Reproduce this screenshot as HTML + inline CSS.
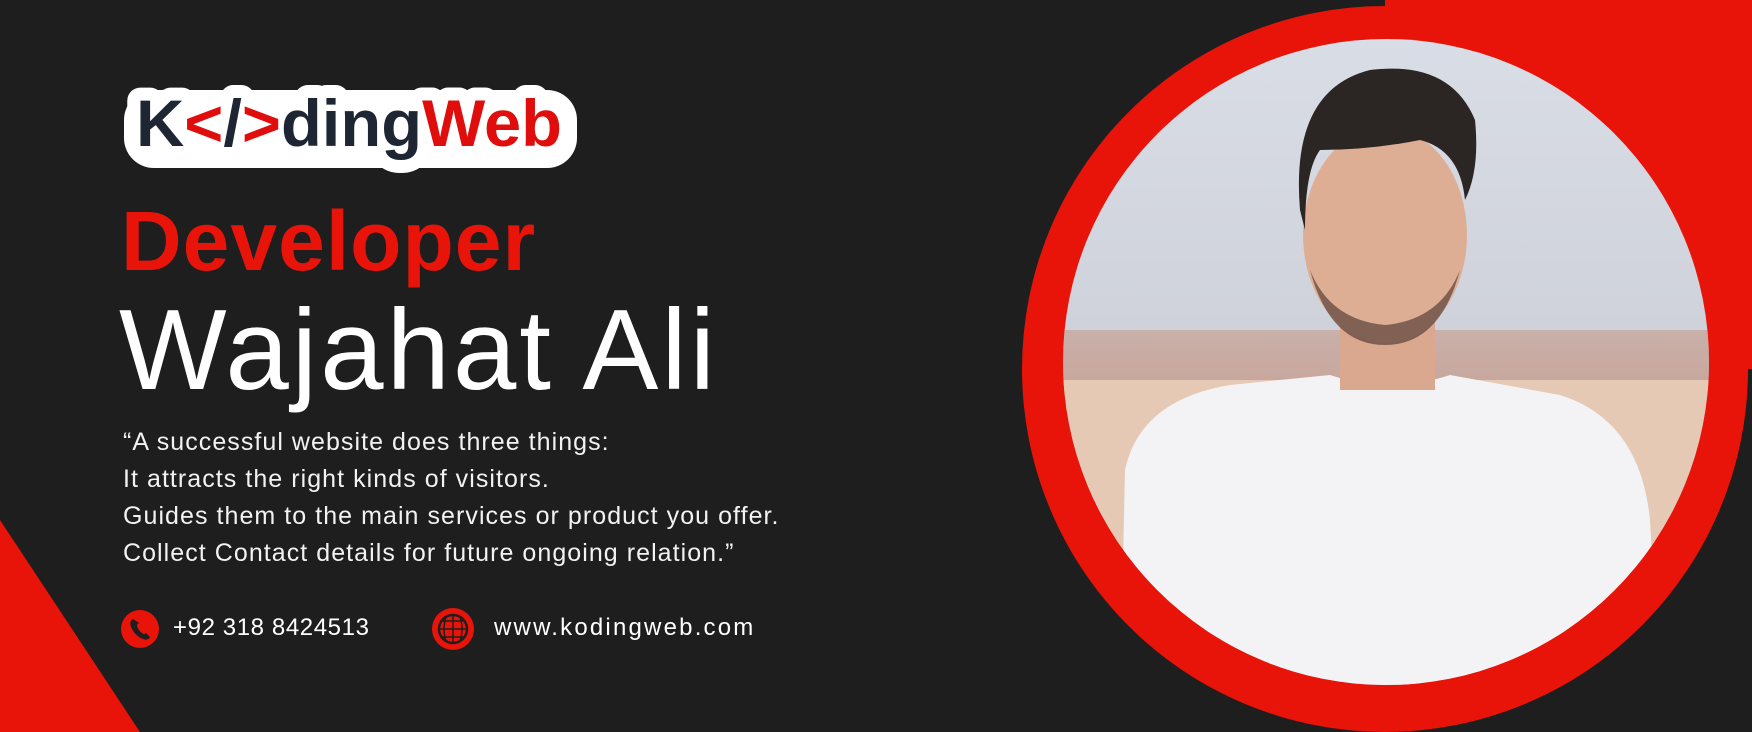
<!DOCTYPE html>
<html><head><meta charset="utf-8"><style>
*{margin:0;padding:0}
body{width:1752px;height:732px;background:#1e1e1e;overflow:hidden;position:relative;font-family:"Liberation Sans",sans-serif}
.abs{position:absolute}
.dev{left:121px;top:193px;font-size:84px;font-weight:bold;color:#e8140a;letter-spacing:1px}
.name{left:119px;top:285px;font-size:114px;color:#fff;letter-spacing:3px}
.quote{left:123px;top:424px;font-size:25px;line-height:37px;color:#f2f2f2;letter-spacing:1.05px}
.ct{top:614px;font-size:24px;color:#fff}
</style></head><body>
<svg class="abs" style="left:0;top:0" width="1752" height="732">
  <polygon points="0,520 0,732 140,732" fill="#e8140a"/>
  <rect x="1385" y="0" width="367" height="369" fill="#e8140a"/>
  <circle cx="1385" cy="369" r="363" fill="#e8140a"/>
  <defs>
    <clipPath id="c"><circle cx="1386" cy="362" r="323"/></clipPath>
    <linearGradient id="sky" x1="0" y1="0" x2="0" y2="1">
      <stop offset="0" stop-color="#d9dde6"/><stop offset="0.45" stop-color="#cfd2da"/>
      <stop offset="0.6" stop-color="#c9a89a"/><stop offset="1" stop-color="#e3c7b5"/>
    </linearGradient>
  </defs>
  <g clip-path="url(#c)">
    <rect x="1060" y="39" width="660" height="650" fill="url(#sky)"/>
    <rect x="1060" y="330" width="660" height="60" fill="#c49a8a" opacity="0.6"/>
    <rect x="1060" y="380" width="660" height="300" fill="#e6c9b4"/>
    <path d="M1120,700 L1125,470 Q1140,400 1230,385 L1330,375 Q1390,395 1450,375 L1560,395 Q1640,420 1650,520 L1660,700 Z" fill="#f3f3f5"/>
    <rect x="1340" y="300" width="95" height="90" fill="#d9a88f"/>
    <ellipse cx="1385" cy="235" rx="82" ry="108" fill="#deae94"/>
    <path d="M1300,210 Q1290,90 1370,70 Q1450,60 1475,120 Q1480,170 1465,200 Q1460,150 1420,140 Q1370,150 1320,150 Q1305,170 1305,230 Z" fill="#2b2523"/>
    <path d="M1310,270 Q1330,345 1385,345 Q1440,345 1460,270 Q1440,320 1385,325 Q1330,320 1310,270 Z" fill="#5a4038" opacity="0.7"/>
  </g>
  <circle cx="140" cy="629" r="19" fill="#e8140a"/>
  <path d="M133,619 q-4,2 -2,8 q4,9 12,12 q5,2 7,-2 l-4,-4 q-2,2 -4,0 q-4,-3 -5,-7 q0,-2 2,-3 z" fill="#1e1e1e"/>
  <circle cx="453" cy="629" r="21" fill="#e8140a"/>
  <circle cx="453" cy="629" r="14" fill="none" stroke="#1e1e1e" stroke-width="2.5"/>
  <path d="M439,629 h28 M441,621 h24 M441,637 h24 M453,615 v28 M446,617 q-4,12 0,24 M460,617 q4,12 0,24" stroke="#1e1e1e" stroke-width="1.5" fill="none"/>
  <rect x="124" y="90" width="453" height="78" rx="30" fill="#fff"/>
  <g font-family="Liberation Sans, sans-serif" font-weight="bold" font-size="66">
    <text x="136" y="146" textLength="426" lengthAdjust="spacingAndGlyphs" fill="#fff" stroke="#fff" stroke-width="26" stroke-linejoin="round">K&lt;/&gt;dingWeb</text>
    <text x="136" y="146" textLength="426" lengthAdjust="spacingAndGlyphs"><tspan fill="#1e2533">K</tspan><tspan fill="#e00d0d">&lt;</tspan><tspan fill="#1e2533">/</tspan><tspan fill="#e00d0d">&gt;</tspan><tspan fill="#1e2533">ding</tspan><tspan fill="#e00d0d">Web</tspan></text>
  </g>
</svg>
<div class="abs dev">Developer</div>
<div class="abs name">Wajahat Ali</div>
<div class="abs quote">“A successful website does three things:<br>It attracts the right kinds of visitors.<br>Guides them to the main services or product you offer.<br>Collect Contact details for future ongoing relation.”</div>
<div class="abs ct" style="left:173px;letter-spacing:0.6px">+92 318 8424513</div>
<div class="abs ct" style="left:494px;letter-spacing:2.2px">www.kodingweb.com</div>
</body></html>
